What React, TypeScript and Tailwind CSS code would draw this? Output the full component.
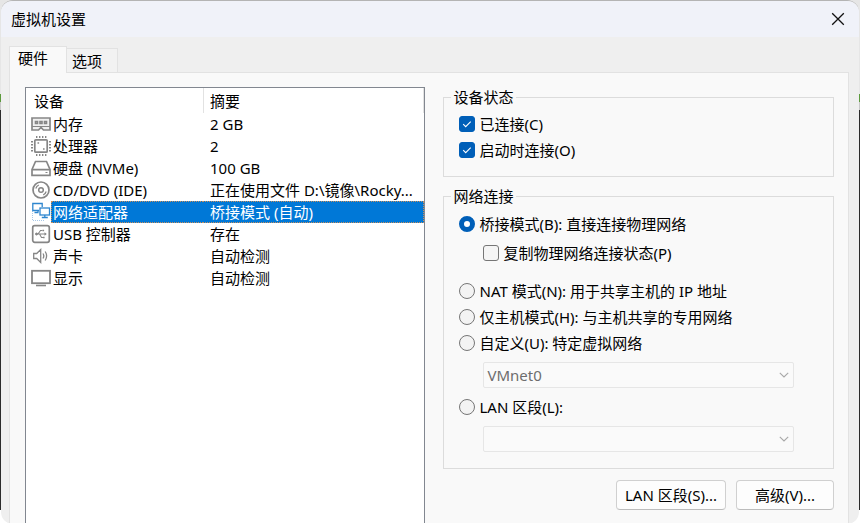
import type { ReactNode } from 'react';

type Device = {
    name: string;
    summary: string;
    icon: ReactNode;
    selected?: boolean;
};

function Icon({ children }: { children: ReactNode }) {
    return (
        <svg viewBox="0 0 20 22" className="block h-[22px] w-5" fill="none" stroke="#868686" strokeWidth="1.7" aria-hidden="true">
            {children}
        </svg>
    );
}

const devices: Device[] = [
    {
        name: '内存',
        summary: '2 GB',
        icon: (
            <Icon>
                <path d="M1 5h18v12h-6.5l-2.5-2.5L7.5 17H1z" fill="#f0f0f0" />
                <path d="M1 13.5h18" strokeWidth="1.2" />
                <path d="M4.5 8.5h2v2h-2zM9 8.5h2v2H9zM13.5 8.5h2v2h-2z" strokeWidth="1.6" />
            </Icon>
        ),
    },
    {
        name: '处理器',
        summary: '2',
        icon: (
            <Icon>
                <rect x="3.8" y="4.8" width="12.4" height="12.4" rx="1" />
                <path d="M5 2h11M5 20h11" strokeWidth="2" strokeDasharray="1.4 1.6" />
                <path d="M1 6v11M19 6v11" strokeWidth="2" strokeDasharray="1.4 1.6" />
                <path d="M6.5 8h1.6M12 14h1.6" />
            </Icon>
        ),
    },
    {
        name: '硬盘 (NVMe)',
        summary: '100 GB',
        icon: (
            <Icon>
                <path d="M1 12.5l3.5-8h11l3.5 8v5.8H1z" />
                <path d="M1 12.7h18" />
                <path d="M14.5 15.5h2" strokeWidth="1.2" />
            </Icon>
        ),
    },
    {
        name: 'CD/DVD (IDE)',
        summary: '正在使用文件 D:\\镜像\\Rocky...',
        icon: (
            <Icon>
                <circle cx="10" cy="11" r="8" />
                <circle cx="10" cy="11" r="2.3" strokeWidth="1.5" />
                <path d="M4.8 9.5a5.5 5.5 0 0 1 3-3.5M15.2 12.5a5.5 5.5 0 0 1-3 3.5" strokeWidth="1.2" />
            </Icon>
        ),
    },
    {
        name: '网络适配器',
        summary: '桥接模式 (自动)',
        selected: true,
        icon: (
            <Icon>
                <path d="M1.5 10v10M2 19.5h12" stroke="#a9c9e8" strokeWidth="1" strokeDasharray="1 1" />
                <path d="M8 9.5H1.8v-7h9.4V6" stroke="#2e86cf" strokeWidth="1.3" />
                <path d="M3.5 11.5h4M7 9.5v2" stroke="#2e86cf" strokeWidth="1.3" />
                <rect x="9" y="7" width="9.5" height="7" stroke="#2e86cf" strokeWidth="1.3" />
                <path d="M13.8 14v2.5M10.8 16.5h6" stroke="#2e86cf" strokeWidth="1.3" />
            </Icon>
        ),
    },
    {
        name: 'USB 控制器',
        summary: '存在',
        icon: (
            <Icon>
                <rect x="1.7" y="2.7" width="16.6" height="16.6" rx="2" />
                <path d="M5 11h9.5M7 11l2.5-3.5h2M8.5 11l2 3.5h2" strokeWidth="1.1" />
                <circle cx="5.5" cy="11" r="1" fill="#868686" strokeWidth="1" />
                <path d="M13.5 9.2v3.6l2.3-1.8zM11.5 6.7h1.6v1.6h-1.6zM12 13.7h1.6v1.6H12z" fill="#868686" stroke="none" />
            </Icon>
        ),
    },
    {
        name: '声卡',
        summary: '自动检测',
        icon: (
            <Icon>
                <path d="M2.7 8.5h3l4-4v13l-4-4h-3z" strokeWidth="1.3" />
                <path d="M12 8.5q1.6 2.5 0 5M14.2 6.5q2.8 4.5 0 9" strokeWidth="1.3" />
            </Icon>
        ),
    },
    {
        name: '显示',
        summary: '自动检测',
        icon: (
            <Icon>
                <rect x="1" y="3.8" width="18" height="12.4" strokeWidth="1.8" />
                <path d="M5 18.5h10" strokeWidth="1.6" />
            </Icon>
        ),
    },
];

function DeviceTable() {
    return (
        <div className="flex-[400] overflow-hidden border border-b-0 border-[#828790] bg-white">
            <table className="w-full table-fixed border-separate border-spacing-0 whitespace-nowrap text-left">
                <colgroup>
                    <col className="w-[25px]" />
                    <col className="w-[152px]" />
                    <col />
                </colgroup>
                <thead>
                    <tr className="h-[25px]">
                        <th colSpan={2} className="p-0 pl-2 font-normal">设备</th>
                        <th className="border-x border-[#e2e2e2] p-0 pl-1.5 font-normal">摘要</th>
                    </tr>
                </thead>
                <tbody>
                    {devices.map((d) => (
                        <tr key={d.name} className="h-[22px]" aria-selected={d.selected}>
                            <td className="p-0 pl-[5px]">{d.icon}</td>
                            {d.selected ? (
                                <>
                                    <td className="border-y border-l border-dotted border-[#c98f5c] bg-[#0078d7] p-0 pl-px text-white">{d.name}</td>
                                    <td className="border-y border-r border-dotted border-[#c98f5c] bg-[#0078d7] p-0 pl-[7px] text-white">{d.summary}</td>
                                </>
                            ) : (
                                <>
                                    <td className="p-0 pl-0.5">{d.name}</td>
                                    <td className="p-0 pl-[7px]">{d.summary}</td>
                                </>
                            )}
                        </tr>
                    ))}
                </tbody>
            </table>
        </div>
    );
}

function Group({ title, className, children }: { title: string; className: string; children: ReactNode }) {
    return (
        <fieldset className={`min-w-0 border border-[#dcdcdc] pl-[15px] ${className}`}>
            <legend className="-ml-2 px-0.5">{title}</legend>
            {children}
        </fieldset>
    );
}

function Checkbox({ label, checked = false }: { label: string; checked?: boolean }) {
    return (
        <label className="flex h-[26px] items-center gap-1">
            <span className="grid size-4">
                <input
                    type="checkbox"
                    defaultChecked={checked}
                    className="peer size-4 appearance-none rounded-[3px] border border-[#767676] bg-[#f5f5f5] [grid-area:1/1] checked:border-[#005fb8] checked:bg-[#005fb8]"
                />
                <svg viewBox="0 0 16 16" className="pointer-events-none invisible size-4 [grid-area:1/1] peer-checked:visible" fill="none" stroke="#fff" strokeWidth="1.1">
                    <path d="M4.2 8.2l2.5 2.5 5-5" />
                </svg>
            </span>
            {label}
        </label>
    );
}

function Radio({ label, checked = false }: { label: string; checked?: boolean }) {
    return (
        <label className="flex h-[26px] items-center gap-1">
            <input
                type="radio"
                name="network"
                defaultChecked={checked}
                className="size-4 appearance-none rounded-full border border-[#767676] bg-[#f3f3f3] checked:border-[5px] checked:border-[#005fb8] checked:bg-white"
            />
            {label}
        </label>
    );
}

function Dropdown({ label, value }: { label: string; value: string }) {
    return (
        <div className="mt-1.5 mr-[39px] ml-6 grid items-center">
            <select
                disabled
                aria-label={label}
                className="h-[26px] w-full appearance-none rounded-[2px] border border-[#e6e6e6] bg-[#fafafa] px-[3px] text-[#6d6d6d] opacity-100 [grid-area:1/1]"
            >
                <option>{value}</option>
            </select>
            <svg viewBox="0 0 10 6" className="pointer-events-none mr-[5px] h-1.5 w-2.5 justify-self-end [grid-area:1/1]" fill="none" stroke="#a8a8a8" strokeWidth="1.1">
                <path d="M.8.8L5 5 9.2.8" />
            </svg>
        </div>
    );
}

function PushButton({ children, className }: { children: ReactNode; className: string }) {
    return (
        <button type="button" className={`h-[30px] rounded-[4px] border border-[#d0d0d0] border-b-[#bcbcbc] bg-[#fdfdfd] whitespace-nowrap ${className}`}>
            {children}
        </button>
    );
}

export default function App() {
    return (
        <div className="flex min-h-screen flex-col bg-[linear-gradient(#e6e6e6_94px,#5c9a3c_94px,#5c9a3c_102px,#c8c8c8_102px,#c8c8c8_110px,#2b2b2b_110px,#2b2b2b_calc(100%-14px),#fff_calc(100%-14px))] px-px font-['Noto_Sans','Noto_Sans_CJK_SC',sans-serif] text-[15px] leading-5 text-black">
            <div className="flex flex-1 flex-col overflow-hidden rounded-xl border-t border-[#b4b4b4] bg-[#efefef]">
                <header className="flex h-9 items-center justify-between bg-[#f0f2f9] pr-3.5 pb-px pl-2.5">
                    <h1>虚拟机设置</h1>
                    <button type="button" aria-label="关闭" className="grid size-3.5 place-items-center">
                        <svg viewBox="0 0 14 14" className="size-3.5" fill="none" stroke="#111" strokeWidth="1.3">
                            <path d="M1.2 1.2l11.6 11.6M12.8 1.2L1.2 12.8" />
                        </svg>
                    </button>
                </header>

                <div className="flex flex-1 flex-col pt-[9px] pr-2.5 pl-2">
                    <div role="tablist" className="flex items-end">
                        <button type="button" role="tab" aria-selected="true" className="z-10 -mb-px h-[27px] border border-b-0 border-[#e2e2e2] bg-[#f9f9f9] pr-[18px] pb-1 pl-2">
                            硬件
                        </button>
                        <button type="button" role="tab" aria-selected="false" className="h-6 border border-b-0 border-l-0 border-[#e2e2e2] bg-[#f2f2f2] pr-[15px] pl-[5px]">
                            选项
                        </button>
                    </div>

                    <main className="flex flex-1 gap-[18px] border border-b-0 border-[#e2e2e2] bg-[#f9f9f9] pt-3.5 pr-3.5 pl-[15px]">
                        <DeviceTable />

                        <form className="flex-[392]">
                            <Group title="设备状态" className="pt-1 pb-[13px]">
                                <Checkbox label="已连接(C)" checked />
                                <Checkbox label="启动时连接(O)" checked />
                            </Group>

                            <Group title="网络连接" className="mt-[9px] pt-[5px] pb-4">
                                <Radio label="桥接模式(B): 直接连接物理网络" checked />
                                <div className="mt-[3px] mb-3 ml-6">
                                    <Checkbox label="复制物理网络连接状态(P)" />
                                </div>
                                <Radio label="NAT 模式(N): 用于共享主机的 IP 地址" />
                                <Radio label="仅主机模式(H): 与主机共享的专用网络" />
                                <Radio label="自定义(U): 特定虚拟网络" />
                                <Dropdown label="特定虚拟网络" value="VMnet0" />
                                <div className="mt-1.5">
                                    <Radio label="LAN 区段(L):" />
                                </div>
                                <Dropdown label="LAN 区段" value="" />
                            </Group>

                            <div className="mt-[11px] flex justify-end gap-2.5 pb-3.5">
                                <PushButton className="w-[110px]">LAN 区段(S)...</PushButton>
                                <PushButton className="w-[98px]">高级(V)...</PushButton>
                            </div>
                        </form>
                    </main>
                </div>
            </div>
        </div>
    );
}
